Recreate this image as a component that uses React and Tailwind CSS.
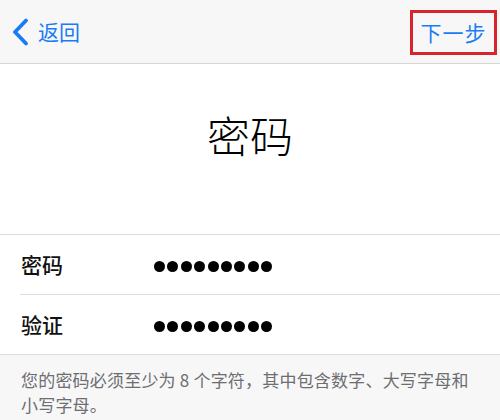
export default function App() {
  var dots = [0, 1, 2, 3, 4, 5, 6, 7, 8];

  var renderDots = function () {
    return (
      <div className="flex gap-[2.4px]">
        {dots.map(function (i) {
          return <span key={i} className="block w-[11px] h-[11px] rounded-full bg-black" />;
        })}
      </div>
    );
  };

  return (
    <div
      className="w-[500px] h-[420px] overflow-hidden bg-white"
      style={{ fontFamily: '"Noto Sans CJK SC", "Noto Sans", sans-serif' }}
    >
      {/* Nav bar */}
      <div className="h-[64px] bg-[#f7f7f7] border-b border-[#d6d6d6] flex items-center justify-between pl-[12px] pr-[3px]">
        <div className="flex items-center gap-[9px] text-[#1a7cf5]">
          <svg width="17" height="28" viewBox="0 0 17 28" className="mt-[1px]">
            <path d="M14 2.5 L3 14 L14 25.5" fill="none" stroke="currentColor" strokeWidth="3.8" strokeLinecap="round" strokeLinejoin="round" />
          </svg>
          <span className="text-[21px] leading-none">返回</span>
        </div>
        <div className="w-[87px] h-[45px] mt-[1px] border-[3px] border-[#d9242e] flex items-center justify-center">
          <span className="text-[21px] leading-none text-[#1a7cf5] tracking-[1px]">下一步</span>
        </div>
      </div>

      {/* Title */}
      <div className="h-[171px] border-b border-[#dcdcdc] flex justify-center pt-[49px]">
        <h1 className="text-[43px] leading-none font-light text-black">密码</h1>
      </div>

      {/* Fields */}
      <div className="border-b border-[#dcdcdc]">
        <div className="pl-[20px]">
          <div className="h-[60px] border-b border-[#dcdcdc] flex items-center">
            <span className="w-[134px] pl-[1px] text-[21px] font-medium text-[#111]">密码</span>
            <div className="mt-[3px]">{renderDots()}</div>
          </div>
        </div>
        <div className="h-[59px] pl-[20px] flex items-center">
          <span className="w-[134px] pl-[1px] text-[21px] font-medium text-[#111]">验证</span>
          <div className="mt-[3px]">{renderDots()}</div>
        </div>
      </div>

      {/* Hint */}
      <div className="bg-[#f7f7f7] h-full px-[21px] pt-[12px]">
        <p className="text-[17px] leading-[25px] text-[#6d6d72] w-[455px] tracking-[0.2px]">
          您的密码必须至少为 8 个字符，其中包含数字、大写字母和小写字母。
        </p>
      </div>
    </div>
  );
}
